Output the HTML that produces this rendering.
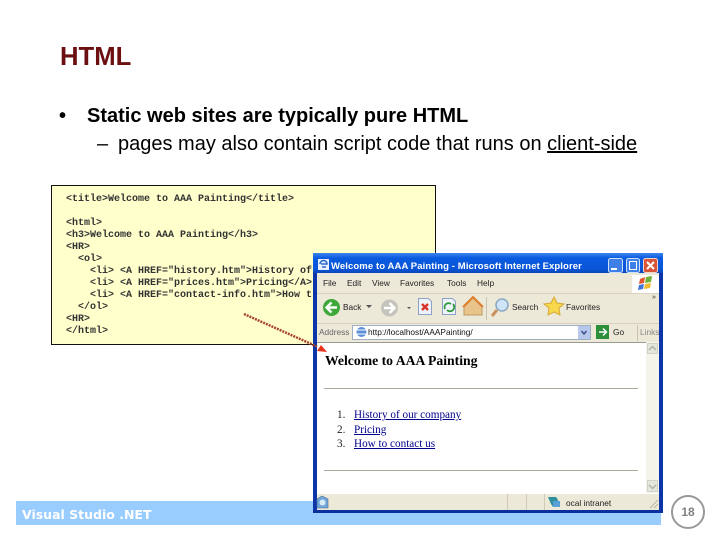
<!DOCTYPE html>
<html><head><meta charset="utf-8">
<style>
html,body{margin:0;padding:0;background:#fff;}
#p{position:relative;width:720px;height:540px;overflow:hidden;background:#fff;font-family:"Liberation Sans",sans-serif;}
.a{position:absolute;white-space:pre;}
.c{position:absolute;left:66px;font:bold 10px/12px "Liberation Mono",monospace;color:#333;white-space:pre;}
.m{position:absolute;font:8.3px/12px "Liberation Sans",sans-serif;color:#222;white-space:pre;}
.l{position:absolute;font:11.2px/13px "Liberation Serif",serif;color:#00008b;text-decoration:underline;white-space:pre;}
.n{position:absolute;font:11.2px/13px "Liberation Serif",serif;color:#222;}
</style></head><body><div id="p">
<div class="a" style="left:60px;top:42px;font:bold 25.7px/30px 'Liberation Sans',sans-serif;color:#6b0f10;">HTML</div>
<div class="a" style="left:59px;top:105px;font:bold 20px/22px 'Liberation Sans',sans-serif;color:#000;">•</div>
<div class="a" style="left:87px;top:105px;font:bold 20px/22px 'Liberation Sans',sans-serif;color:#000;">Static web sites are typically pure HTML</div>
<div class="a" style="left:97px;top:133px;font:20px/22px 'Liberation Sans',sans-serif;color:#000;">–</div>
<div class="a" style="left:118px;top:133px;font:20px/22px 'Liberation Sans',sans-serif;color:#000;">pages may also contain script code that runs on <span style="text-decoration:underline">client-side</span></div>

<div style="position:absolute;left:51px;top:185px;width:383px;height:158px;background:#ffffcc;border:1px solid #111;"></div>
<div class="c" style="top:194px">&lt;title&gt;Welcome to AAA Painting&lt;/title&gt;</div>
<div class="c" style="top:218px">&lt;html&gt;</div>
<div class="c" style="top:230px">&lt;h3&gt;Welcome to AAA Painting&lt;/h3&gt;</div>
<div class="c" style="top:242px">&lt;HR&gt;</div>
<div class="c" style="top:254px">  &lt;ol&gt;</div>
<div class="c" style="top:266px">    &lt;li&gt; &lt;A HREF="history.htm"&gt;History of</div>
<div class="c" style="top:278px">    &lt;li&gt; &lt;A HREF="prices.htm"&gt;Pricing&lt;/A&gt;</div>
<div class="c" style="top:290px">    &lt;li&gt; &lt;A HREF="contact-info.htm"&gt;How t</div>
<div class="c" style="top:302px">  &lt;/ol&gt;</div>
<div class="c" style="top:314px">&lt;HR&gt;</div>
<div class="c" style="top:326px">&lt;/html&gt;</div>

<div style="position:absolute;left:16px;top:501px;width:645px;height:24px;background:#99ccff;"></div>
<div class="a" style="left:22px;top:507px;font:bold 12.5px/16px 'DejaVu Sans',sans-serif;color:#fff;">Visual Studio .NET</div>
<div style="position:absolute;left:671px;top:495px;width:30px;height:30px;border:2px solid #999;border-radius:50%;background:#fff;"></div>
<div class="a" style="left:671px;top:505px;width:34px;text-align:center;font:bold 12px/14px 'Liberation Sans',sans-serif;color:#808080;">18</div>

<!-- browser window -->
<div style="position:absolute;left:313px;top:253px;width:350px;height:260px;background:#0b35a8;overflow:hidden;">
  <div style="position:absolute;left:0;top:0;width:350px;height:20px;background:linear-gradient(#3d86ee,#0a5be0 25%,#0b55d8 80%,#0a46b8);"></div>
  <div style="position:absolute;left:4px;top:20px;width:342px;height:237px;background:#ece9d8;"></div>
  <div style="position:absolute;left:4px;top:89px;width:329px;height:151px;background:#fff;border-top:1px solid #9a9a90;box-sizing:border-box;"></div>
  <div style="position:absolute;left:333px;top:89px;width:13px;height:151px;background:#f5f4ea;"></div>
  <div style="position:absolute;left:334px;top:90px;width:11px;height:11px;background:#e4e7dc;border:1px solid #d0d2c6;box-sizing:border-box;"></div>
  <div style="position:absolute;left:334px;top:227px;width:11px;height:12px;background:#e4e7dc;border:1px solid #d0d2c6;box-sizing:border-box;"></div>
  <div style="position:absolute;left:4px;top:240px;width:342px;height:17px;background:#ece9d8;border-top:1px solid #fff;box-sizing:border-box;"></div>
  <div style="position:absolute;left:0;top:257px;width:350px;height:3px;background:#0a2f9e;"></div>
</div>
<svg style="position:absolute;left:313px;top:253px" width="350" height="260" viewBox="0 0 350 260">
  <rect x="5" y="6" width="11" height="11" fill="#e8f0ff"/><path d="M7 11a3.500 3.500 0 1 1 7 0H8M13 14H9" stroke="#2a6ac8" stroke-width="1.500" fill="none"/>
  <rect x="295.500" y="5.500" width="14" height="14" rx="2" fill="#3f7fe8" stroke="#cfe0fa"/><rect x="298" y="15" width="6" height="2" fill="#fff"/>
  <rect x="313.500" y="5.500" width="13" height="14" rx="2" fill="#3f7fe8" stroke="#cfe0fa"/><rect x="316.500" y="8.500" width="7" height="8" fill="none" stroke="#fff"/>
  <rect x="330.500" y="5.500" width="14" height="14" rx="2" fill="#d8553a" stroke="#f2d6cc"/><path d="M334 9l7 7M341 9l-7 7" stroke="#fff" stroke-width="2"/>
  <line x1="4" y1="40.500" x2="346" y2="40.500" stroke="#d6d2bd"/>
  <rect x="319" y="22" width="27" height="18" fill="#fff"/>
  <path d="M327 26l5-2-1 6-5 1z" fill="#e3552b"/><path d="M333 24l6-1-1 6-6 1z" fill="#6fb23a"/><path d="M326 32l5-1-1 5-5 1z" fill="#3f74d8"/><path d="M332 31l6-1-1 5-6 1z" fill="#f0b92e"/>
  <line x1="4" y1="70.500" x2="346" y2="70.500" stroke="#d6d2bd"/>
  <circle cx="18.500" cy="54.500" r="8.500" fill="#3fa83a"/><path d="M24 54.500h-10M18.500 49.500l-5 5 5 5" stroke="#fff" stroke-width="2.400" fill="none"/>
  <circle cx="76.500" cy="55" r="8.500" fill="#c4c4bc"/><path d="M71 55h10M76.500 50l5 5-5 5" stroke="#fff" stroke-width="2.400" fill="none"/>
  <path d="M53 52l3 3 3-3zM94 54l2 2 2-2z" fill="#555"/>
  <path d="M105.500 45.500h10l3 3v13h-13z" fill="#eef2fb" stroke="#8ea2c8"/><path d="M109 51l6 6M115 51l-6 6" stroke="#d8342a" stroke-width="2.400"/>
  <path d="M129.500 45.500h10l3 3v13h-13z" fill="#eef2fb" stroke="#8ea2c8"/><path d="M132 56a4 4 0 0 1 6-5M140 51a4 4 0 0 1-6 6" stroke="#2c9a3a" stroke-width="1.800" fill="none"/>
  <path d="M151 54l9-9 9 9v8h-18z" fill="#e8c48a" stroke="#b89a66"/><path d="M150 54l10-10 10 10" fill="none" stroke="#e07f2e" stroke-width="2"/>
  <line x1="173.500" y1="44" x2="173.500" y2="67" stroke="#c8c4b0"/>
  <circle cx="189" cy="52" r="6" fill="#cfe4f6" stroke="#8aa8c4" stroke-width="1.500"/><path d="M184 57l-5 6" stroke="#c89060" stroke-width="3"/>
  <path d="M241 44l3 6 7 1-5 4 1 7-6-3-6 3 1-7-5-4 7-1z" fill="#f6d84a" stroke="#d8a838"/>
  <rect x="39.500" y="72.500" width="238" height="14" fill="#fff" stroke="#9fb0c8"/>
  <circle cx="48.500" cy="79" r="5" fill="#5a8ed8"/><path d="M44 77h9M44 81h9" stroke="#fff"/>
  <rect x="265" y="73" width="12" height="13" fill="#b8c8ec"/><path d="M268.500 78l2.500 3 2.500-3" stroke="#3a4f8a" stroke-width="1.500" fill="none"/>
  <rect x="283" y="72" width="13" height="14" fill="#2e8f3a"/><path d="M286 79h7M290 75.500l3.500 3.500-3.500 3.500" stroke="#fff" stroke-width="1.500" fill="none"/>
  <line x1="324.500" y1="72" x2="324.500" y2="88" stroke="#c8c4b0"/>
  <path d="M336 97l3.500-3.500 3.500 3.500" stroke="#b0b4a4" stroke-width="1.500" fill="none"/>
  <path d="M336 232l3.500 3.500 3.500-3.500" stroke="#b0b4a4" stroke-width="1.500" fill="none"/>
  <path d="M4 246l5-3 6 3v9H4z" fill="#6fa6dc" stroke="#506a8a" stroke-width=".6"/><circle cx="9.500" cy="249.500" r="3" fill="#d8ecf8"/>
  <path d="M194.500 241v16M213.500 241v16M231.500 241v16" stroke="#cfcbb8"/>
  <path d="M235 244h8l2 3v7h-5l-2-3z" fill="#2f8f9a"/><path d="M240 248h7v6h-7z" fill="#5aa0d8"/>
  <path d="M337 255l8-8M341 255l4-4" stroke="#b8b4a0"/>
</svg>
<div class="m" style="left:323px;top:277px;">File</div>
<div class="m" style="left:347px;top:277px;">Edit</div>
<div class="m" style="left:372px;top:277px;">View</div>
<div class="m" style="left:400px;top:277px;">Favorites</div>
<div class="m" style="left:447px;top:277px;">Tools</div>
<div class="m" style="left:477px;top:277px;">Help</div>
<div class="a" style="left:331px;top:260px;font:bold 9.5px/13px 'Liberation Sans',sans-serif;color:#fff;letter-spacing:.1px;">Welcome to AAA Painting - Microsoft Internet Explorer</div>
<div class="m" style="left:343px;top:301px;">Back</div>
<div class="m" style="left:512px;top:301px;">Search</div>
<div class="m" style="left:566px;top:301px;">Favorites</div>
<div class="m" style="left:319px;top:326px;color:#666;">Address</div>
<div class="m" style="left:368px;top:326px;color:#111;">http://localhost/AAAPainting/</div>
<div class="m" style="left:613px;top:326px;">Go</div>
<div class="m" style="left:640px;top:326px;color:#888;">Links</div>
<div class="a" style="left:652px;top:293px;font:7px/9px 'Liberation Sans',sans-serif;color:#333;">»</div>
<div class="a" style="left:325px;top:353px;font:bold 13.7px/16px 'Liberation Serif',serif;color:#000;">Welcome to AAA Painting</div>
<div style="position:absolute;left:324px;top:388px;width:314px;height:1px;background:#aaa89a;"></div>
<div style="position:absolute;left:324px;top:470px;width:314px;height:1px;background:#aaa89a;"></div>
<div class="n" style="left:337px;top:409px">1.</div><div class="l" style="left:354px;top:409px">History of our company</div>
<div class="n" style="left:337px;top:424px">2.</div><div class="l" style="left:354px;top:424px">Pricing</div>
<div class="n" style="left:337px;top:438px">3.</div><div class="l" style="left:354px;top:438px">How to contact us</div>
<div class="m" style="left:566px;top:497px;">ocal intranet</div>

<svg style="position:absolute;left:240px;top:310px" width="90" height="45" viewBox="0 0 90 45">
  <line x1="4" y1="4" x2="78" y2="37" stroke="#a8442e" stroke-width="2.500" stroke-dasharray="2 1"/>
  <path d="M87 42l-10-1 4-6z" fill="#e6331a"/>
</svg>
</div></body></html>
